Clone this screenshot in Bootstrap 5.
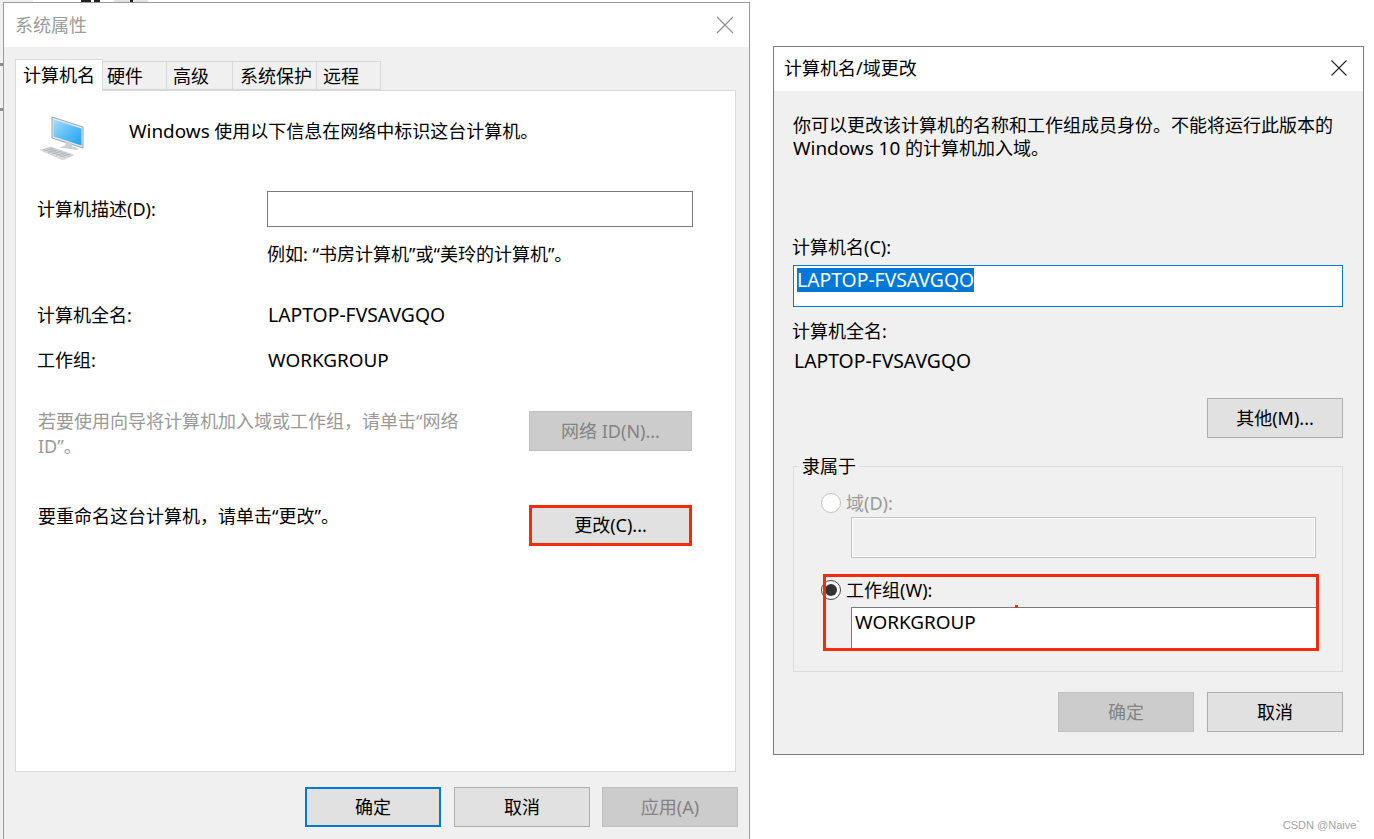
<!DOCTYPE html>
<html lang="zh-CN">
<head>
<meta charset="utf-8">
<title>系统属性</title>
<link href="https://cdn.jsdelivr.net/npm/bootstrap@5.3.0/dist/css/bootstrap.min.css" rel="stylesheet">
<style>
html,body{height:100%;margin:0;background:#fff;overflow:hidden}
body{font-family:"Noto Sans","Noto Sans CJK SC",sans-serif;font-size:18px;line-height:23px;color:#000}
.stage{position:relative;width:1374px;height:839px;overflow:hidden}
.win{position:absolute;background:#f0f0f0;border:1px solid #7a7a7a;display:flex;flex-direction:column}
.win-a{left:3px;top:2px;width:747px;height:839px;border-color:#9b9b9b}
.win-b{left:773px;top:46px;width:591px;height:709px;padding:0}
.tbar{background:#fff;height:44px;flex:none;display:flex;align-items:center;justify-content:space-between;padding:0 15px 0 11px}
.win-a .tbar{color:#9a9a9a}
.win-b .tbar{padding-left:10px;padding-bottom:2px}
.x-ic{width:18px;height:18px;display:block}
.tabstrip{display:flex;align-items:flex-end;height:44px;margin:0 0 0 11px;flex:none;position:relative;z-index:1;list-style:none;padding:0}
.tb{height:29px;border:1px solid #d9d9d9;border-left:0;background:#f0f0f0;padding:1px 0 0 7px;display:flex;align-items:center;margin-bottom:1px;white-space:nowrap}
.tb-on{height:32px;background:#fff;border:1px solid #d9d9d9;border-bottom:0;margin-bottom:0;padding:0 0 0 7px;width:88px}
.w1{width:64px;padding-left:4px}.w2{width:66px;padding-left:6px}.w3{width:84px}.w4{width:64px;padding-left:6px}
.panel{background:#fff;border:1px solid #d9d9d9;margin:-1px 13px 0 11px;height:682px;padding:0 43px 0 22px;flex:none}
.rw{display:flex;align-items:center}
.lab{width:230px;margin-left:-1px;flex:none}
.field{height:36px;flex:1;border:1px solid #7a7a7a;background:#fff;margin-right:-1px}
.lat{font-size:18.9px}
.lat-w{font-size:19.35px}
.val{margin-left:1px}
.nudge{margin-left:-1px}
.wbtn{display:flex;align-items:center;justify-content:center;width:136px;height:40px;background:#e1e1e1;border:1px solid #adadad;color:#000;flex:none;border-radius:0;padding:0;font-size:18px;line-height:23px}
.wbtn-off{background:#ccc;border-color:#bfbfbf;color:#838383}
.wbtn-def{border:2px solid #0078d7}
.wbtn-red{border:3px solid #f52b0b;width:163px;height:41px}
.off{color:#999}
.twoline{line-height:25px}
.foot{display:flex;gap:13px;justify-content:flex-end;margin:15px 11px 0 0}
.foot .wbtn-off{margin-left:-1px}
.ico{margin:25px 0 0 2px;width:46px;height:44px;flex:none}
.wm{position:absolute;right:14px;bottom:7px;font-size:11px;line-height:14px;color:#a3a3a3;font-family:"Liberation Sans",sans-serif}
.nameinput{height:42px;border:1px solid #0078d7;background:#fff;padding:2px 3px}
.sel{background:#0078d7;color:#fff;display:inline-block;height:24px;line-height:24px}
.grp{position:relative;border:1px solid #dcdcdc;height:206px;margin-top:28px;padding:26px 26px 0 27px}
.legendish{position:absolute;left:5px;top:-12px;background:#f0f0f0;padding:0 3px}
.rad{width:20px;height:20px;border-radius:50%;border:1px solid #c4c4c4;background:#fff;flex:none;display:flex;align-items:center;justify-content:center}
.rad-on{border:1px solid #444}
.rad-on i{display:block;width:12px;height:12px;border-radius:50%;background:#333}
.radrow{display:flex;align-items:center;gap:5px;height:20px}
.dfield{margin:4px 0 0 30px;height:41px;border:1px solid #c4c4c4;background:#f0f0f0;outline:1px solid #fff;outline-offset:-2px}
.wfield{margin:7px 0 0 30px;height:42px;background:#fff;border:1px solid #7a7a7a;border-bottom:0;border-right:0;padding:3px 3px}
.mark-box{position:absolute;left:29px;top:107px;width:496px;height:77px;border:3px solid #f52b0b;pointer-events:none}
.red-dot{position:absolute;left:189px;top:28px;width:3px;height:3px;background:#f52b0b}
.frag{position:absolute;top:0;height:2px}
.strip{position:absolute;background:#f0f0f0}
.tick{position:absolute;left:0;width:3px;height:3px;background:#8c8c8c}
</style>
</head>
<body>
<div class="stage">
  <span class="strip" style="left:0;top:0;width:3px;height:839px"></span>
  <span class="strip" style="left:0;top:0;width:33px;height:2px"></span>
  <span class="frag" style="left:114px;width:34px;background:#e3e3e3"></span>
  <span class="frag" style="left:81px;width:10px;background:#222"></span>
  <span class="frag" style="left:94px;width:6px;background:#222"></span>
  <span class="frag" style="left:130px;width:3px;background:#222"></span>
  <span class="tick" style="top:63px"></span>
  <span class="tick" style="top:108px"></span>

  <section class="win win-a">
    <div class="tbar"><span>系统属性</span><svg class="x-ic" viewBox="0 0 18 18"><path d="M1 1l16 16M17 1L1 17" stroke="#8f8f8f" stroke-width="1.2" fill="none"/></svg></div>
    <ul class="tabstrip">
      <li class="tb tb-on">计算机名</li>
      <li class="tb w1">硬件</li>
      <li class="tb w2">高级</li>
      <li class="tb w3">系统保护</li>
      <li class="tb w4">远程</li>
    </ul>
    <div class="panel">
      <div class="d-flex">
        <svg class="ico" viewBox="0 0 46 44">
          <defs><linearGradient id="scr" x1="0" y1="0" x2="1" y2="1"><stop offset="0" stop-color="#a6dcfb"/><stop offset=".5" stop-color="#5cbdf8"/><stop offset="1" stop-color="#22a3f4"/></linearGradient></defs>
          <path d="M12 1l31 10v21l-31-10z" fill="#e4e9ec" stroke="#7f8f9a" stroke-width=".8"/>
          <path d="M13.5 3.5l28 9v17l-28-9z" fill="url(#scr)"/>
          <path d="M26 25.5l6 2v3l6 2v1.500l-19-2.500 6-2z" fill="#c8d0d5"/>
          <path d="M0 34l11-3 23 8-11 5z" fill="#dcdfe1" stroke="#bcc0c3" stroke-width=".4"/>
          <path d="M3 33.300l23 8.200M6 32.500l23 8M9 31.800l22 7.800M4 35l10-2.700M8 36.500l10-2.800M12 38l10-2.900M16 39.500l10-3M20 41l10-3" stroke="#a3a9ad" stroke-width=".6" fill="none"/>
        </svg>
        <div style="margin:29px 0 0 43px"><span class="lat">Windows</span> 使用以下信息在网络中标识这台计算机。</div>
      </div>
      <div class="rw" style="margin-top:31px"><span class="lab">计算机描述(D):</span><div class="field"></div></div>
      <div style="margin:16px 0 0 229px">例如: “书房计算机”或“美玲的计算机”。</div>
      <div class="d-flex align-items-start" style="margin-top:38px"><span class="lab">计算机全名:</span><span class="lat-w val" style="margin-top:-1px">LAPTOP-FVSAVGQO</span></div>
      <div class="rw" style="margin-top:22px"><span class="lab">工作组:</span><span class="lat val">WORKGROUP</span></div>
      <div class="d-flex justify-content-between align-items-start" style="margin-top:39px;height:40px">
        <div class="off twoline" style="width:430px;margin-top:-2px">若要使用向导将计算机加入域或工作组，请单击“网络 ID”。</div>
        <button class="wbtn wbtn-off" style="width:163px" type="button" disabled>网络 ID(N)...</button>
      </div>
      <div class="d-flex justify-content-between" style="margin-top:54px">
        <div>要重命名这台计算机，请单击“更改”。</div>
        <button class="wbtn wbtn-red" type="button">更改(C)...</button>
      </div>
    </div>
    <div class="foot">
      <button class="wbtn wbtn-def" type="button">确定</button>
      <button class="wbtn" type="button">取消</button>
      <button class="wbtn wbtn-off" type="button" disabled>应用(A)</button>
    </div>
  </section>

  <section class="win win-b">
    <div class="tbar"><span>计算机名/域更改</span><svg class="x-ic" style="width:16px;height:16px;margin-right:1px" viewBox="0 0 16 16"><path d="M.5.5l15 15M15.5.5l-15 15" stroke="#222" stroke-width="1.1" fill="none"/></svg></div>
    <div style="padding:0 20px 0 19px">
      <div style="margin-top:23px;width:540px">你可以更改该计算机的名称和工作组成员身份。不能将运行此版本的 <span class="lat">Windows 10</span> 的计算机加入域。</div>
      <div class="nudge" style="margin-top:76px">计算机名(C):</div>
      <div class="nameinput" style="margin-top:6px"><span class="sel lat-w">LAPTOP-FVSAVGQO</span></div>
      <div class="nudge" style="margin-top:13px">计算机全名:</div>
      <div class="lat-w val" style="margin-top:6px">LAPTOP-FVSAVGQO</div>
      <div class="d-flex justify-content-end" style="margin-top:26px"><button class="wbtn" type="button">其他(M)...</button></div>
      <div class="grp">
        <span class="legendish">隶属于</span>
        <div class="radrow off"><span class="rad"></span><span>域(D):</span></div>
        <div class="dfield"></div>
        <div class="radrow" style="margin-top:22px"><span class="rad rad-on"><i></i></span><span>工作组(W):</span></div>
        <div class="wfield lat">WORKGROUP</div>
        <div class="mark-box"><span class="red-dot"></span></div>
      </div>
      <div class="d-flex justify-content-end" style="gap:13px;margin-top:20px">
        <button class="wbtn wbtn-off" type="button" disabled>确定</button>
        <button class="wbtn" type="button">取消</button>
      </div>
    </div>
  </section>
  <div class="wm">CSDN @Naive`</div>
</div>
<script src="https://cdn.jsdelivr.net/npm/bootstrap@5.3.0/dist/js/bootstrap.bundle.min.js"></script>
</body>
</html>
